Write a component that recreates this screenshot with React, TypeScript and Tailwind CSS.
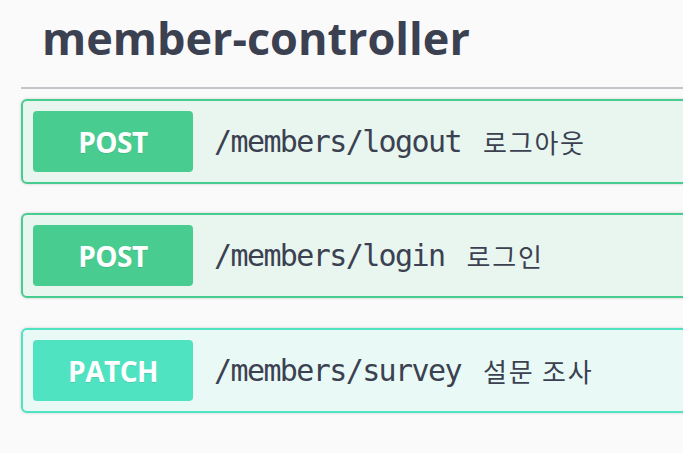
import React from 'react';

type Op = {
  method: string;
  path: string;
  summary: string;
  badge: string;
  card: string;
  border: string;
};

const ops: Op[] = [
  {
    method: 'POST',
    path: '/members/logout',
    summary: '로그아웃',
    badge: 'bg-[#49cc90]',
    card: 'bg-[#e8f6ef]',
    border: 'border-[#49cc90]',
  },
  {
    method: 'POST',
    path: '/members/login',
    summary: '로그인',
    badge: 'bg-[#49cc90]',
    card: 'bg-[#e8f6ef]',
    border: 'border-[#49cc90]',
  },
  {
    method: 'PATCH',
    path: '/members/survey',
    summary: '설문 조사',
    badge: 'bg-[#50e3c2]',
    card: 'bg-[#e9f9f5]',
    border: 'border-[#50e3c2]',
  },
];

function OpBlock({ op }: { op: Op }) {
  return (
    <div
      className={`flex items-center h-[85px] p-[10px] border-2 rounded-[6px] shadow-[0_0_3px_rgba(0,0,0,0.19)] ${op.card} ${op.border}`}
    >
      <span
        className={`flex items-center justify-center w-[160px] h-[61px] rounded-[4px] text-white font-bold text-[28px] tracking-[-0.5px] [text-shadow:0_1px_0_rgba(0,0,0,0.1)] ${op.badge}`}
        style={{ fontFamily: '"Open Sans", sans-serif' }}
      >
        {op.method}
      </span>
      <span className="ml-[21px] text-[#3b4151] text-[30px] tracking-[-1.6px] font-['DejaVu_Sans_Mono',monospace]">
        {op.path}
      </span>
      <span className="ml-[22px] text-[#3b4151] text-[26px] tracking-[1.8px] font-['Noto_Sans_CJK_KR',sans-serif]">
        {op.summary}
      </span>
    </div>
  );
}

export default function App() {
  return (
    <div className="w-[683px] h-[453px] overflow-hidden bg-[#fafafa]">
      <div className="w-[760px] pl-[21px]">
        <div className="h-[89px] border-b-2 border-[#c4c5ca] pl-[21px] pt-[15px]">
          <h3 className="text-[45px] leading-[45px] font-bold text-[#3b4151] font-['Open_Sans',sans-serif]">
            member-controller
          </h3>
        </div>
        <div className="mt-[10px] flex flex-col">
          <OpBlock op={ops[0]} />
          <div className="mt-[29px]">
            <OpBlock op={ops[1]} />
          </div>
          <div className="mt-[30px]">
            <OpBlock op={ops[2]} />
          </div>
        </div>
      </div>
    </div>
  );
}
